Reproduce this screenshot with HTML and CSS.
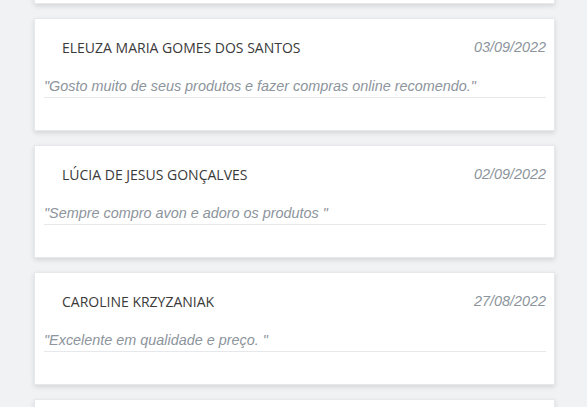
FILE: index.html
```html
<!DOCTYPE html>
<html lang="pt-BR">
<head>
    <meta charset="UTF-8">
    <meta name="viewport" content="width=device-width, initial-scale=1.0">
    <title>Depoimentos</title>
    <link rel="stylesheet" href="styles.css">
</head>
<body>
    <main class="reviews">
        <!-- scrolled list: first card is above the viewport, only its bottom shows -->
        <div class="review"></div>

        <div class="review">
            <div class="review-head">
                <span class="review-name">ELEUZA MARIA GOMES DOS SANTOS</span>
                <span class="review-date">03/09/2022</span>
            </div>
            <p class="review-text">"Gosto muito de seus produtos e fazer compras online recomendo."</p>
        </div>

        <div class="review">
            <div class="review-head">
                <span class="review-name">LÚCIA DE JESUS GONÇALVES</span>
                <span class="review-date">02/09/2022</span>
            </div>
            <p class="review-text">"Sempre compro avon e adoro os produtos "</p>
        </div>

        <div class="review">
            <div class="review-head">
                <span class="review-name">CAROLINE KRZYZANIAK</span>
                <span class="review-date">27/08/2022</span>
            </div>
            <p class="review-text">"Excelente em qualidade e preço. "</p>
        </div>

        <div class="review"></div>
    </main>
</body>
</html>
```

FILE: styles.css
```css
body {
    margin: 0;
    padding: 0;
    background-color: #f1f2f4;
    font-family: "Liberation Sans", Arial, sans-serif;
    overflow: hidden;
}

.reviews {
    margin-top: -109px;
    padding: 0 32px 0 34px;
}

.review {
    box-sizing: border-box;
    height: 113px;
    margin-bottom: 14px;
    padding: 18px 8px 0 9px;
    background-color: #fff;
    border: 1px solid #e6e8eb;
    box-shadow: 0 2px 5px rgba(0, 0, 0, 0.12);
}

.review-head {
    display: flex;
    justify-content: space-between;
    align-items: flex-start;
    height: 20px;
}

.review-name {
    padding: 2px 0 0 18px;
    font-family: "Open Sans", sans-serif;
    font-size: 14px;
    line-height: 18px;
    color: #3a3a3a;
}

.review-date {
    font-size: 14.4px;
    line-height: 20px;
    font-style: italic;
    color: #8c949c;
}

.review-text {
    margin: 19px 0 0 0;
    padding-bottom: 1px;
    border-bottom: 1px solid #e6e8eb;
    font-size: 14.4px;
    line-height: 20px;
    font-style: italic;
    color: #8c949c;
}
```
